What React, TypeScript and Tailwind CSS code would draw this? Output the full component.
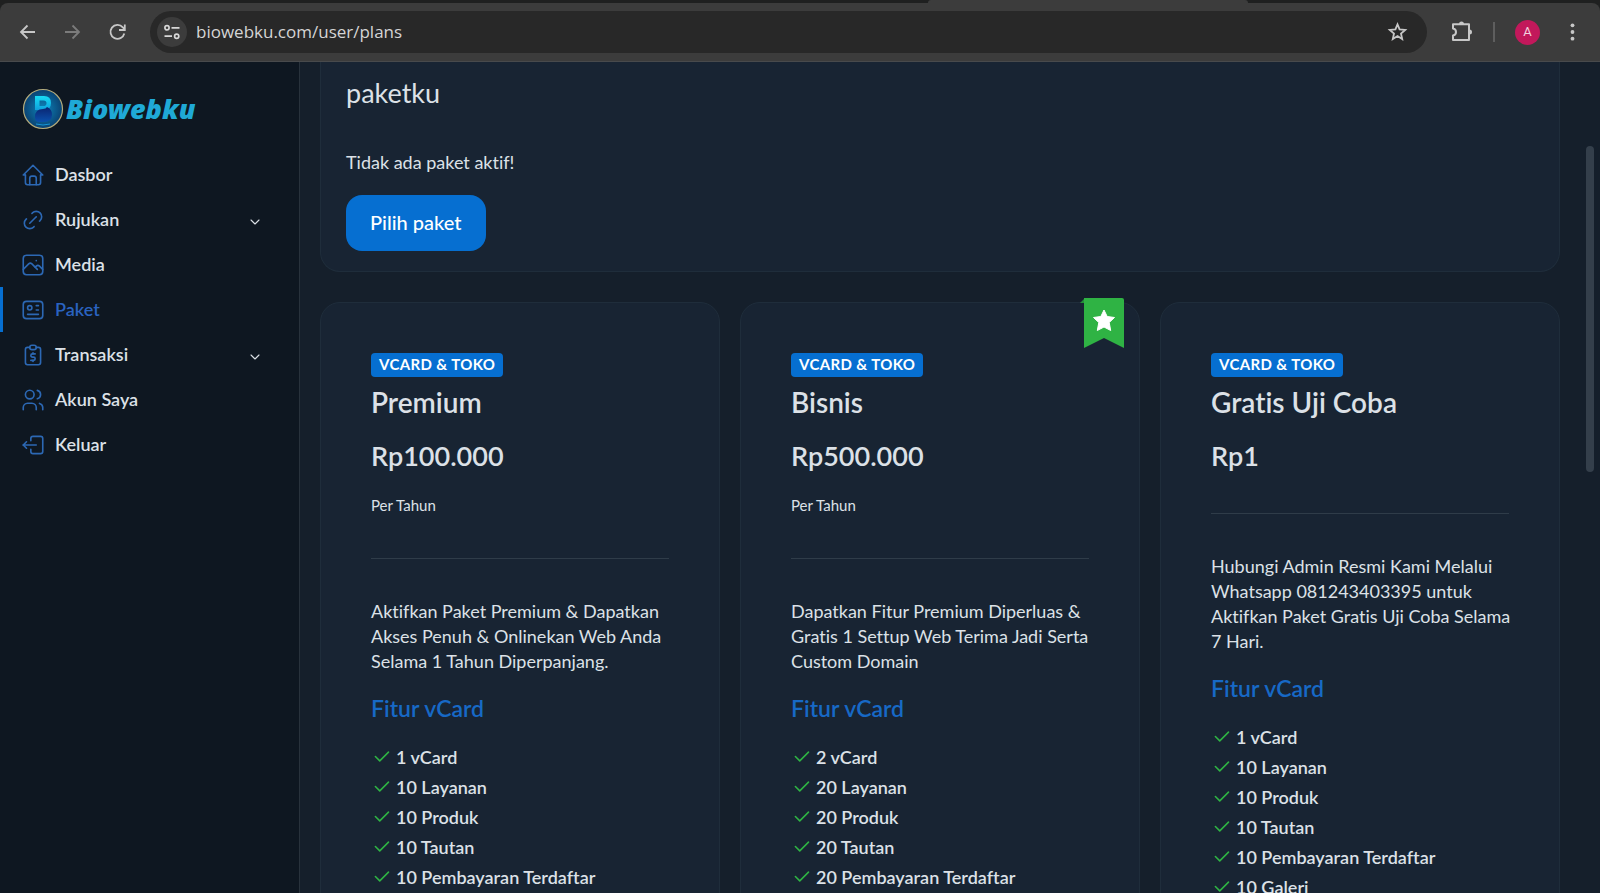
import type { ReactNode } from "react"
import {
  TbCheck,
  TbChevronDown,
  TbHome,
  TbId,
  TbLink,
  TbLogout2,
  TbPhoto,
  TbReportMoney,
  TbUsers,
} from "react-icons/tb"
import type { IconType } from "react-icons"

interface MenuItem {
  label: string
  icon: IconType
  active?: boolean
  expandable?: boolean
}

interface Plan {
  name: string
  price: string
  period?: string
  description: string
  features: string[]
  recommended?: boolean
}

const menu: MenuItem[] = [
  { label: "Dasbor", icon: TbHome },
  { label: "Rujukan", icon: TbLink, expandable: true },
  { label: "Media", icon: TbPhoto },
  { label: "Paket", icon: TbId, active: true },
  { label: "Transaksi", icon: TbReportMoney, expandable: true },
  { label: "Akun Saya", icon: TbUsers },
  { label: "Keluar", icon: TbLogout2 },
]

const plans: Plan[] = [
  {
    name: "Premium",
    price: "Rp100.000",
    period: "Per Tahun",
    description: "Aktifkan Paket Premium & Dapatkan Akses Penuh & Onlinekan Web Anda Selama 1 Tahun Diperpanjang.",
    features: ["1 vCard", "10 Layanan", "10 Produk", "10 Tautan", "10 Pembayaran Terdaftar"],
  },
  {
    name: "Bisnis",
    price: "Rp500.000",
    period: "Per Tahun",
    description: "Dapatkan Fitur Premium Diperluas & Gratis 1 Settup Web Terima Jadi Serta Custom Domain",
    features: ["2 vCard", "20 Layanan", "20 Produk", "20 Tautan", "20 Pembayaran Terdaftar"],
    recommended: true,
  },
  {
    name: "Gratis Uji Coba",
    price: "Rp1",
    description: "Hubungi Admin Resmi Kami Melalui Whatsapp 081243403395 untuk Aktifkan Paket Gratis Uji Coba Selama 7\u00a0Hari.",
    features: ["1 vCard", "10 Layanan", "10 Produk", "10 Tautan", "10 Pembayaran Terdaftar", "10 Galeri"],
  },
]

function ToolbarButton({ label, children }: { label: string; children: ReactNode }) {
  return (
    <button type="button" aria-label={label} className="flex size-6 shrink-0 items-center justify-center">
      {children}
    </button>
  )
}

function BrowserBar() {
  return (
    <header className="relative shrink-0 bg-[#1f2020] pt-[3px]">
      {/* bottom edge of the selected tab */}
      <div className="absolute top-0 left-[58%] h-[3px] w-[20%] rounded-t-sm bg-[#3c3c3c]" />
      <div className="flex h-[59px] items-center rounded-t-lg border-b border-[#484a4c] bg-[#3c3c3c] pr-4 pl-4 text-[#c7c7c7]">
        <div className="flex gap-[21px]">
          <ToolbarButton label="Back">
            <svg viewBox="0 0 24 24" className="size-6" fill="none" stroke="currentColor" strokeWidth="1.8">
              <path d="M19 12H5.500M11.500 5.500L5 12L11.500 18.500" />
            </svg>
          </ToolbarButton>
          <ToolbarButton label="Forward">
            <svg viewBox="0 0 24 24" className="size-6 text-[#7b7b7b]" fill="none" stroke="currentColor" strokeWidth="1.8">
              <path d="M4 12H17.500M11.500 5.500L18 12L11.500 18.500" />
            </svg>
          </ToolbarButton>
          <ToolbarButton label="Reload">
            <svg viewBox="0 0 24 24" className="size-6" fill="none" stroke="currentColor" strokeWidth="1.8">
              <path d="M18.300 13.500A7 7 0 1 1 16.800 7.300L18.500 9.500M18.800 4.500V10H13" />
            </svg>
          </ToolbarButton>
        </div>
        <div className="ml-5 flex h-[42px] flex-1 items-center rounded-full bg-[#282828] pr-[18px] pl-[7px]">
          <button type="button" aria-label="Site information" className="flex size-[30px] shrink-0 items-center justify-center rounded-full bg-[#3c3c3c]">
            <svg viewBox="0 0 18 18" className="size-[18px]" fill="none" stroke="#d8d8d8" strokeWidth="1.7">
              <circle cx="4" cy="4.800" r="2.100" />
              <path d="M8.500 4.800H16.500M1.500 13.200H9" />
              <circle cx="13.700" cy="13.200" r="2.100" />
            </svg>
          </button>
          <input
            type="text"
            aria-label="Address"
            defaultValue="biowebku.com/user/plans"
            className="ml-[9px] h-8 min-w-0 flex-1 bg-transparent pb-0.5 font-['Open_Sans',sans-serif] text-[17px] text-[#d5d5d5] outline-none"
          />
          <ToolbarButton label="Bookmark">
            <svg viewBox="0 0 24 24" className="size-6" fill="none" stroke="currentColor" strokeWidth="1.8">
              <path d="M12.500 4.300L14.600 9.400L20.200 9.900L16 13.500L17.200 19L12.500 16.100L7.800 19L9 13.500L4.800 9.900L10.400 9.400Z" />
            </svg>
          </ToolbarButton>
        </div>
        <div className="ml-[22px] flex items-center gap-5">
          <ToolbarButton label="Extensions">
            <svg viewBox="0 0 24 24" className="size-6" fill="none" stroke="currentColor" strokeWidth="2">
              <path d="M4.500 4.200H20V20H4V15.500Q7 15 7 12Q7 9 4 8.500V4.200Z" strokeLinejoin="round" />
              <path d="M10 4A2.500 2.500 0 0 1 15 4ZM20.500 9.500A2.500 2.500 0 0 1 20.500 14.500Z" fill="currentColor" stroke="none" />
            </svg>
          </ToolbarButton>
          <span className="h-5 w-0.5 bg-[#5e5e5e]" />
          <button type="button" aria-label="Profile" className="flex size-[25px] items-center justify-center rounded-full bg-[#c2185b] font-[Roboto,sans-serif] text-[13px] text-[#f3d3df]">
            A
          </button>
          <ToolbarButton label="Menu">
            <svg viewBox="0 0 24 24" className="size-6" fill="currentColor">
              <circle cx="12.500" cy="5.300" r="1.900" />
              <circle cx="12.500" cy="12" r="1.900" />
              <circle cx="12.500" cy="18.700" r="1.900" />
            </svg>
          </ToolbarButton>
        </div>
      </div>
    </header>
  )
}

function Logo() {
  return (
    <a href="#" className="flex items-center gap-0.5">
      <svg viewBox="0 0 42 42" className="size-[42px] shrink-0" aria-hidden="true">
        <defs>
          <radialGradient id="disc" cx="50%" cy="50%" r="50%">
            <stop offset="0" stopColor="#0d86bd" />
            <stop offset="1" stopColor="#0a4272" />
          </radialGradient>
          <linearGradient id="mark" x1="0" y1="0" x2="0" y2="1">
            <stop offset="0" stopColor="#17dcf5" />
            <stop offset="1" stopColor="#0fa0dc" />
          </linearGradient>
          <linearGradient id="base" x1="0" y1="0" x2="0" y2="1">
            <stop offset="0" stopColor="#0a2470" />
            <stop offset="1" stopColor="#0b50ac" />
          </linearGradient>
        </defs>
        <circle cx="21" cy="21" r="19.500" fill="url(#disc)" stroke="#b3ab7c" strokeWidth="1.2" />
        <path fill="url(#mark)" fillRule="evenodd" d="M13 8H22Q29 8 29 15Q29 22 22 22H13ZM17.500 12.500V18H21.500Q24.500 18 24.500 15.200Q24.500 12.500 21.500 12.500Z" />
        <path fill="url(#base)" d="M25 19Q30 21 30 26.500Q30 34 22 34H17Q13 34 13 29Q13 21 21 21Q24 21 25 19Z" />
        <path d="M14 36Q21 38 28 36" stroke="#1596d8" strokeWidth="1" fill="none" />
      </svg>
      <span className="font-['Noto_Sans','Open_Sans',sans-serif] text-[27px] leading-10 font-black text-[#1fa9d6] italic">Biowebku</span>
    </a>
  )
}

function Sidebar() {
  return (
    <aside className="w-[300px] shrink-0 border-r border-[#28323c] bg-[#0e1721] pt-[26px]">
      <div className="pl-[22px]">
        <Logo />
      </div>
      <nav className="mt-[22px]">
        {menu.map(({ label, icon: Icon, active, expandable }) => (
          <a
            key={label}
            href="#"
            className={`flex h-[45px] items-center gap-[9px] border-l-[3px] pr-9 pl-[17px] text-[18px] font-semibold ${
              active ? "border-[#066fd1] text-[#2a63c0]" : "border-transparent text-[#dce1e7]"
            }`}
          >
            <Icon className="size-[26px] shrink-0 text-[#2c68b4]" strokeWidth={1.5} />
            <span className="flex-1">{label}</span>
            {expandable && <TbChevronDown className="mt-1 size-4" strokeWidth={1.6} />}
          </a>
        ))}
      </nav>
    </aside>
  )
}

function Ribbon() {
  return (
    <svg viewBox="0 0 44 51" className="absolute -top-[5px] right-[15px] h-[51px] w-11" aria-label="Recommended">
      <path d="M5 0L0 5H5Z" fill="#238f38" />
      <path d="M4 0H42Q44 0 44 2V50L24 40L4 50Z" fill="#2fb344" />
      <path
        d="M24 12L27.200 18.500L34.500 19.500L29.200 24.500L30.700 32.500L24 29L17.300 32.500L18.800 24.500L13.500 19.500L20.800 18.500Z"
        fill="#fff"
        stroke="#fff"
        strokeLinejoin="round"
      />
    </svg>
  )
}

function PlanCard({ plan }: { plan: Plan }) {
  return (
    <article className="relative rounded-[20px] border border-[#1f2d3b] bg-[#182433] px-[50px] pt-[50px] pb-12">
      {plan.recommended && <Ribbon />}
      <span className="flex h-6 w-fit items-center rounded bg-[#066fd1] px-2 pb-0.5 text-[15px] font-bold tracking-wide text-white">
        VCARD &amp; TOKO
      </span>
      <h2 className="mt-[7px] text-[28px] leading-9 font-semibold">{plan.name}</h2>
      <p className="mt-5 text-[27px] leading-8 font-semibold">{plan.price}</p>
      {plan.period && <p className="mt-[21px] text-[15px] leading-6">{plan.period}</p>}
      <hr className="mt-[41px] mb-10 border-[#2f3c49]" />
      <p className="-mr-4 text-[18px] leading-[25px]">{plan.description}</p>
      <h3 className="mt-[18px] text-[23px] leading-8 font-semibold text-[#1769c6]">Fitur vCard</h3>
      <ul className="mt-[18px]">
        {plan.features.map((feature) => (
          <li key={feature} className="flex h-[30px] items-center gap-1 text-[18px] font-semibold">
            <TbCheck className="mb-0.5 size-[21px]" color="#2fb344" strokeWidth={1.8} />
            {feature}
          </li>
        ))}
      </ul>
    </article>
  )
}

export default function App() {
  return (
    <div className="flex h-screen flex-col overflow-hidden bg-[#151f2b] font-[Lato,sans-serif] text-[#dce1e7] [font-variant-ligatures:none]">
      <BrowserBar />
      <div className="relative flex min-h-0 flex-1">
        <Sidebar />
        <main className="min-w-0 flex-1 overflow-hidden pr-10 pl-5">
          <section className="rounded-b-[20px] border border-t-0 border-[#1f2d3b] bg-[#182433] px-[25px] pt-[13px] pb-5">
            <h1 className="text-[27px] leading-9">paketku</h1>
            <p className="mt-[39px] text-[18px] leading-[25px]">Tidak ada paket aktif!</p>
            <button type="button" className="mt-5 h-14 rounded-2xl bg-[#066fd1] px-6 pb-0.5 text-[20px] font-medium text-white">
              Pilih paket
            </button>
          </section>
          <div className="mt-[30px] grid grid-cols-3 gap-5">
            {plans.map((plan) => (
              <PlanCard key={plan.name} plan={plan} />
            ))}
          </div>
        </main>
        <div className="absolute top-[84px] right-[6px] h-[326px] w-2 rounded-full bg-[#343f4b]" />
      </div>
    </div>
  )
}
